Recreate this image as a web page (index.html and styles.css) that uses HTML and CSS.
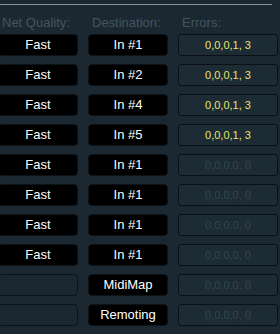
FILE: index.html
```html
<!DOCTYPE html>
<html lang="en">
<head>
  <meta charset="UTF-8">
  <title>Network Status</title>
  <link rel="stylesheet" href="styles.css">
</head>
<body>

  <div class="panel">
    <div class="rule"></div>

    <div class="grid heads">
      <div class="head">Net Quality:</div>
      <div class="head">Destination:</div>
      <div class="head">Errors:</div>
    </div>

    <div class="grid rows">
      <div class="cell solid">Fast</div>
      <div class="cell solid">In #1</div>
      <div class="cell errors active">0,0,0,1, 3</div>

      <div class="cell solid">Fast</div>
      <div class="cell solid">In #2</div>
      <div class="cell errors active">0,0,0,1, 3</div>

      <div class="cell solid">Fast</div>
      <div class="cell solid">In #4</div>
      <div class="cell errors active">0,0,0,1, 3</div>

      <div class="cell solid">Fast</div>
      <div class="cell solid">In #5</div>
      <div class="cell errors active">0,0,0,1, 3</div>

      <div class="cell solid">Fast</div>
      <div class="cell solid">In #1</div>
      <div class="cell errors">0,0,0,0, 0</div>

      <div class="cell solid">Fast</div>
      <div class="cell solid">In #1</div>
      <div class="cell errors">0,0,0,0, 0</div>

      <div class="cell solid">Fast</div>
      <div class="cell solid">In #1</div>
      <div class="cell errors">0,0,0,0, 0</div>

      <div class="cell solid">Fast</div>
      <div class="cell solid">In #1</div>
      <div class="cell errors">0,0,0,0, 0</div>

      <div class="cell empty"></div>
      <div class="cell solid">MidiMap</div>
      <div class="cell errors">0,0,0,0, 0</div>

      <div class="cell empty"></div>
      <div class="cell solid">Remoting</div>
      <div class="cell errors">0,0,0,0, 0</div>
    </div>
  </div>

</body>
</html>
```

FILE: styles.css
```css
* {
  margin: 0;
  padding: 0;
  box-sizing: border-box;
}

html, body {
  height: 100%;
  background: #1b2832;
  font-family: 'Liberation Sans', Arial, sans-serif;
  overflow: hidden;
}

.panel {
  padding-top: 4px;
}

.rule {
  width: 272px;
  height: 1px;
  background: #8797a1;
}

.grid {
  display: grid;
  grid-template-columns: 80px 80px 100px;
  column-gap: 10px;
  margin-left: -2px;
}

.heads {
  margin-top: 10px;
}

.head {
  font-size: 13px;
  line-height: 15px;
  color: #435560;
  padding-left: 4px;
  white-space: nowrap;
}

.rows {
  margin-top: 4px;
  row-gap: 8px;
}

.cell {
  height: 22px;
  line-height: 20px;
  text-align: center;
  border-radius: 4px;
  border: 1px solid #0c1318;
  white-space: nowrap;
}

.solid {
  background: #000;
  color: #fff;
  font-size: 13px;
}

.empty {
  background: #1b2832;
}

.errors {
  background: #1d2b35;
  border-color: #0a1116;
  color: #34454f;
  font-size: 11px;
  border-radius: 3px;
}

.errors.active {
  color: #e6e670;
}
```
